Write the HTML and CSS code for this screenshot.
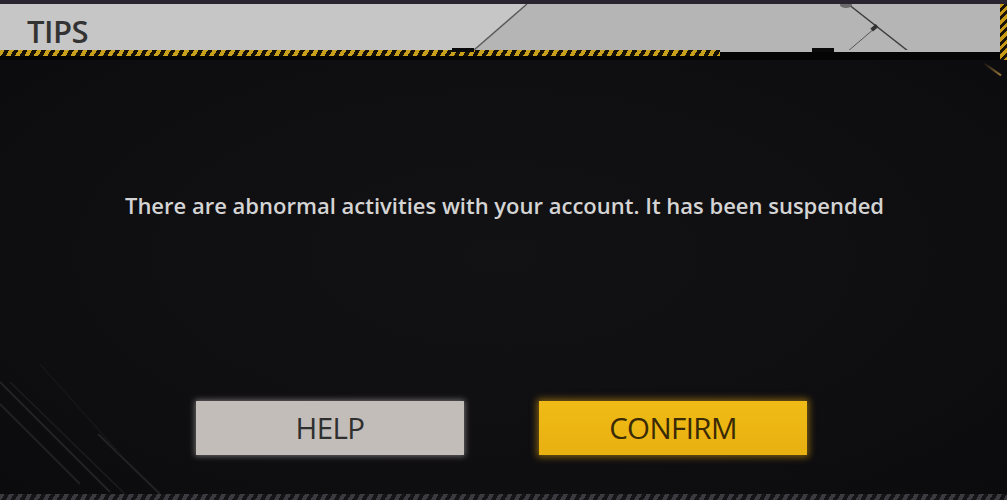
FILE: index.html
```html
<!DOCTYPE html>
<html lang="en">
<head>
<meta charset="utf-8">
<title>Tips</title>
<link rel="stylesheet" href="styles.css">
</head>
<body>
<div class="screen">
  <div class="topband"></div>
  <div class="head-grid">
    <div class="header">
      <svg class="header-deco" width="1000" height="46" viewBox="0 0 1000 46">
        <polygon points="527,0 1000,0 1000,46 474,46" fill="#b5b5b5"/>
        <line x1="527" y1="0" x2="474" y2="46" stroke="#5a5a5a" stroke-width="1.4"/>
        <line x1="848" y1="0" x2="908" y2="47" stroke="#3c3c3c" stroke-width="1.4"/>
        <line x1="875" y1="24" x2="847" y2="48" stroke="#555" stroke-width="1"/>
        <rect x="871" y="22" width="7" height="4" fill="#333" transform="rotate(-40 874 24)"/>
        <ellipse cx="846" cy="1" rx="6" ry="3" fill="#6a6a6a"/>
      </svg>
      <h1 class="title">TIPS</h1>
    </div>
    <div class="edge"></div>
    <div class="stripe-row">
      <div class="hazard"></div>
      <div class="hazard-rest">
        <span class="notch notch-a"></span>
        <span class="notch notch-b"></span>
      </div>
    </div>
  </div>
  <main class="dialog">
    <svg class="corner-deco" width="200" height="130" viewBox="0 0 200 130">
      <line x1="0" y1="18" x2="110" y2="128" stroke="#232226" stroke-width="2"/>
      <line x1="0" y1="40" x2="80" y2="120" stroke="#201f23" stroke-width="2"/>
      <line x1="10" y1="18" x2="125" y2="130" stroke="#1c1b1f" stroke-width="1.5"/>
      <line x1="98" y1="70" x2="160" y2="130" stroke="#222125" stroke-width="2"/>
      <line x1="40" y1="0" x2="120" y2="90" stroke="#161519" stroke-width="1.5"/>
    </svg>
    <span class="glint"></span>
    <p class="message">There are abnormal activities with your account. It has been suspended</p>
    <div class="actions">
      <button class="btn btn-help" type="button">HELP</button>
      <button class="btn btn-confirm" type="button">CONFIRM</button>
    </div>
  </main>
  <div class="bottom-stripe"></div>
</div>
</body>
</html>
```
FILE: styles.css
```css
* { box-sizing: border-box; }
html, body { margin: 0; padding: 0; }
body {
  width: 1007px;
  height: 500px;
  overflow: hidden;
  background: #0f0e11;
  font-family: "Open Sans", "DejaVu Sans", sans-serif;
}
.screen {
  display: flex;
  flex-direction: column;
  width: 1007px;
  height: 500px;
}
.topband {
  height: 4px;
  background: #2a2330;
}
.head-grid {
  display: grid;
  grid-template-columns: 1000px 7px;
  grid-template-rows: 46px 10px;
}
.header {
  position: relative;
  background: #c6c6c6;
  display: flex;
  align-items: center;
  padding-left: 27px;
  padding-top: 9px;
}
.header-deco {
  position: absolute;
  left: 0;
  top: 0;
}
.title {
  position: relative;
  margin: 0;
  font-size: 31px;
  font-weight: 600;
  font-stretch: 100%;
  color: #333;
  letter-spacing: -0.5px;
  line-height: 37px;
  height: 37px;
}
.edge {
  grid-row: 1 / 3;
  grid-column: 2;
  background: repeating-linear-gradient(135deg, #c79a16 0 3px, #1b1406 3px 6px);
}
.stripe-row {
  display: flex;
  background: #050505;
}
.hazard {
  width: 720px;
  height: 6px;
  background: repeating-linear-gradient(120deg, #c9a01c 0 4px, #151105 4px 8px);
}
.hazard-rest {
  position: relative;
  flex: 1;
  height: 2px;
  background: #b5b5b5;
}
.notch {
  position: absolute;
  top: -2px;
  height: 4px;
  background: #0a0a0a;
}
.notch-a { left: -268px; width: 22px; }
.notch-b { left: 92px; width: 22px; }
.dialog {
  position: relative;
  height: 434px;
  display: flex;
  flex-direction: column;
  align-items: center;
  padding-top: 131px;
  background: radial-gradient(ellipse at 50% 45%, #121114 0%, #0e0d10 70%, #0b0a0d 100%);
}
.corner-deco {
  position: absolute;
  left: 0;
  bottom: 0;
}
.glint {
  position: absolute;
  right: 4px;
  top: 8px;
  width: 22px;
  height: 2px;
  background: linear-gradient(90deg, rgba(200,150,60,0), rgba(210,160,70,0.7));
  transform: rotate(35deg);
}
.message {
  margin: 0;
  height: 28px;
  line-height: 28px;
  font-size: 22px;
  font-weight: 600;
  font-stretch: 100%;
  letter-spacing: 0;
  color: #d4d4d4;
  text-align: center;
  padding-left: 2px;
  white-space: nowrap;
}
.actions {
  margin-top: 182px;
  display: flex;
  gap: 75px;
  margin-right: 4px;
}
.btn {
  width: 268px;
  height: 54px;
  border: 0;
  padding: 0;
  font-family: "Open Sans", "DejaVu Sans", sans-serif;
  font-size: 29.5px;
  font-weight: 500;
  font-stretch: 100%;
  line-height: 54px;
  letter-spacing: -0.6px;
}
.btn-help {
  background: #c3bdb9;
  color: #2f2f2f;
  box-shadow: 0 0 6px 1px rgba(235, 230, 225, 0.45);
}
.btn-confirm {
  background: linear-gradient(180deg, #f0bb16 0%, #e8b010 100%);
  color: #3a2a05;
  box-shadow: 0 0 7px 2px rgba(220, 160, 20, 0.55);
}
.bottom-stripe {
  height: 6px;
  background: repeating-linear-gradient(120deg, #3b3a40 0 4px, #141316 4px 8px);
}
```
